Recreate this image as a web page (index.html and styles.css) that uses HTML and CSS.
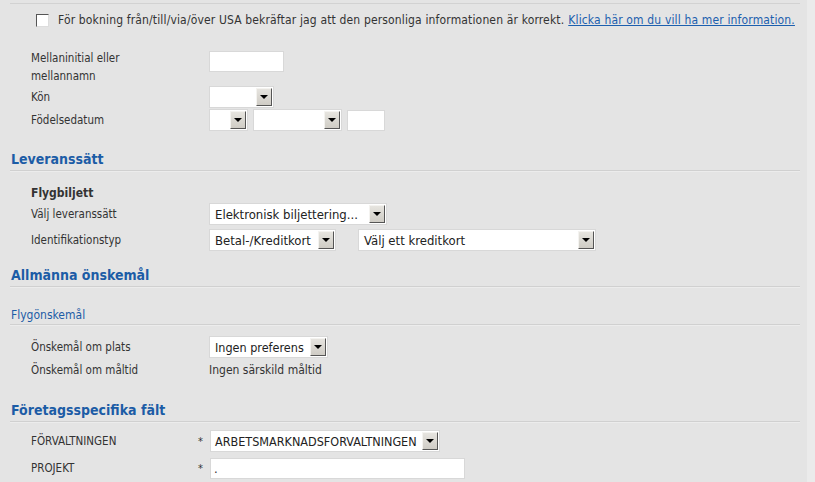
FILE: index.html
```html
<!DOCTYPE html>
<html lang="sv">
<head>
    <meta charset="UTF-8">
    <title>Resenärsuppgifter</title>
    <link rel="stylesheet" href="styles.css">
</head>
<body>
    <div class="page">
        <div class="confirm-row">
            <span class="checkbox"></span>
            <span>För bokning från/till/via/över USA bekräftar jag att den personliga informationen är korrekt.</span>
            <a href="#" class="info-link">Klicka här om du vill ha mer information.</a>
        </div>

        <div class="form-block personal">
            <div class="row tall">
                <div class="label">Mellaninitial eller<br>mellannamn</div>
                <div class="controls"><span class="textbox w75"></span></div>
            </div>
            <div class="row">
                <div class="label">Kön</div>
                <div class="controls">
                    <div class="sel w65"><span class="val"></span><span class="btn"></span></div>
                </div>
            </div>
            <div class="row">
                <div class="label">Födelsedatum</div>
                <div class="controls">
                    <div class="sel w39"><span class="val"></span><span class="btn"></span></div>
                    <div class="sel w89"><span class="val"></span><span class="btn"></span></div>
                    <span class="textbox w38"></span>
                </div>
            </div>
        </div>

        <h2 class="section-title delivery">Leveranssätt</h2>
        <div class="form-block delivery-block">
            <div class="subhead">Flygbiljett</div>
            <div class="row">
                <div class="label">Välj leveranssätt</div>
                <div class="controls">
                    <div class="sel w178"><span class="val">Elektronisk biljettering...</span><span class="btn"></span></div>
                </div>
            </div>
            <div class="row">
                <div class="label">Identifikationstyp</div>
                <div class="controls">
                    <div class="sel w127"><span class="val">Betal-/Kreditkort</span><span class="btn"></span></div>
                    <div class="sel w238 gap-left"><span class="val">Välj ett kreditkort</span><span class="btn"></span></div>
                </div>
            </div>
        </div>

        <h2 class="section-title wishes">Allmänna önskemål</h2>
        <h3 class="sub-title">Flygönskemål</h3>
        <div class="form-block wishes-block">
            <div class="row">
                <div class="label">Önskemål om plats</div>
                <div class="controls">
                    <div class="sel w119"><span class="val short">Ingen preferens</span><span class="btn"></span></div>
                </div>
            </div>
            <div class="row">
                <div class="label">Önskemål om måltid</div>
                <div class="controls"><span class="static">Ingen särskild måltid</span></div>
            </div>
        </div>

        <h2 class="section-title company-title">Företagsspecifika fält</h2>
        <div class="form-block company">
            <div class="row">
                <div class="label">FÖRVALTNINGEN</div>
                <div class="star">*</div>
                <div class="controls">
                    <div class="sel w230"><span class="val caps">ARBETSMARKNADSFORVALTNINGEN</span><span class="btn"></span></div>
                </div>
            </div>
            <div class="row">
                <div class="label">PROJEKT</div>
                <div class="star">*</div>
                <div class="controls"><span class="textbox w255">.</span></div>
            </div>
        </div>
    </div>
</body>
</html>
```

FILE: styles.css
```css
body {
    margin: 0;
    padding: 3px 0 0 0;
    background: linear-gradient(to right, #e4e4e4 807px, #ebebeb 807px);
    font-family: "DejaVu Sans", Verdana, sans-serif;
    font-stretch: condensed;
    font-size: 11.5px;
    color: #333;
}
.page {
    width: 790px;
    margin-left: 10px;
    border-top: 1px solid #d2d2d2;
}
.confirm-row {
    display: flex;
    align-items: center;
    padding: 8px 0 0 26px;
    height: 16px;
    font-size: 12px;
    letter-spacing: 0.15px;
    color: #333;
    white-space: nowrap;
}
.checkbox {
    width: 11px;
    height: 11px;
    border: 1px solid #555;
    border-right-color: #ddd;
    border-bottom-color: #ddd;
    background: #fff;
    margin-right: 9px;
}
.info-link {
    color: #1c5fae;
    margin-left: 4px;
}
.form-block {
    padding-left: 21px;
}
.row {
    display: grid;
    grid-template-columns: 178px auto;
    align-items: center;
    height: 22px;
    margin-bottom: 4px;
}
.row:last-child {
    margin-bottom: 0;
}
.controls {
    display: flex;
    align-items: center;
    gap: 5px;
}

/* personal data */
.personal {
    margin-top: 21px;
}
.personal .row {
    margin-bottom: 1px;
}
.row.tall {
    height: 36px;
    align-items: start;
}
.row.tall .label {
    line-height: 18px;
}
.row.tall .controls {
    margin-top: 2px;
}

/* inputs */
.textbox {
    display: inline-block;
    box-sizing: border-box;
    height: 21px;
    background: #fff;
    border: 1px solid #d8d8d8;
    font-size: 13px;
    line-height: 19px;
    padding-left: 3px;
}
.sel {
    display: flex;
    align-items: center;
    box-sizing: border-box;
    height: 22px;
    background: #fff;
    border: 1px solid #d8d8d8;
    padding: 1px;
}
.sel .val {
    flex: 1;
    font-size: 13px;
    color: #222;
    padding-left: 4px;
    white-space: nowrap;
    overflow: hidden;
}
.sel .val.short {
    font-size: 12.5px;
}
.sel .val.caps {
    font-size: 12.5px;
    padding-left: 3px;
}
.sel .btn {
    position: relative;
    width: 16px;
    height: 18px;
    box-sizing: border-box;
    background: linear-gradient(#e6e4df, #cfccc5);
    border: 1px solid;
    border-color: #f4f3f0 #555 #555 #f4f3f0;
}
.sel .btn::after {
    content: "";
    position: absolute;
    left: 3px;
    top: 6px;
    border-left: 4px solid transparent;
    border-right: 4px solid transparent;
    border-top: 4px solid #000;
}
.w38 { width: 38px; }
.w39 { width: 39px; }
.w65 { width: 65px; }
.w75 { width: 75px; }
.w89 { width: 89px; }
.w119 { width: 119px; }
.w127 { width: 127px; }
.w178 { width: 178px; }
.w230 { width: 230px; }
.w238 { width: 238px; }
.w255 { width: 255px; }
.gap-left { margin-left: 17px; }

/* headings */
.section-title {
    margin: 0;
    padding: 0 0 2px 1px;
    font-size: 14px;
    font-weight: bold;
    color: #1c5ca6;
    line-height: 18px;
    border-bottom: 1px solid #d0d0d0;
    box-shadow: 0 1px 0 #ececec;
}
.sub-title {
    margin: 20px 0 0 0;
    padding: 0 0 1px 1px;
    font-size: 12px;
    font-weight: normal;
    color: #1c5ca6;
    line-height: 16px;
    border-bottom: 1px solid #d0d0d0;
    box-shadow: 0 1px 0 #ececec;
}
.subhead {
    font-weight: bold;
    font-size: 12px;
    height: 20px;
    line-height: 20px;
}
.delivery { margin-top: 19px; }
.delivery-block { margin-top: 12px; }
.wishes { margin-top: 15px; }
.wishes-block { margin-top: 11px; }
.wishes-block .row { margin-bottom: 1px; }
.company-title { margin-top: 20px; }
.company {
    margin-top: 8px;
}
.company .row {
    grid-template-columns: 167px 12px auto;
    margin-bottom: 5px;
}
.star {
    font-size: 11px;
}
.static {
    font-size: 12px;
}
```
